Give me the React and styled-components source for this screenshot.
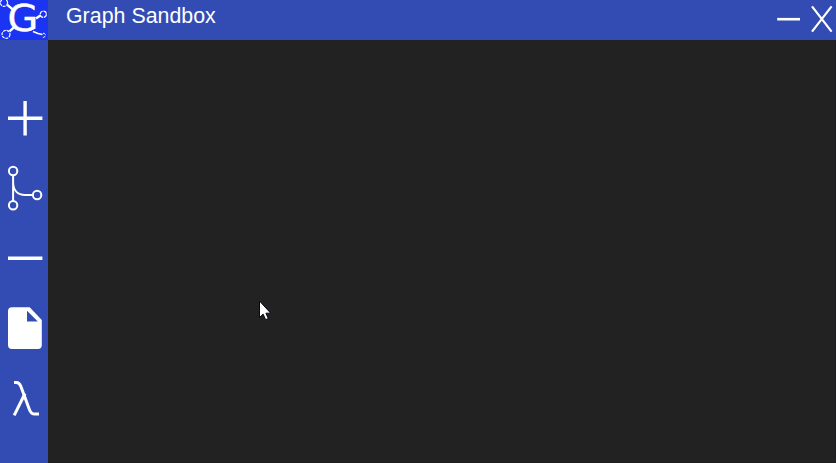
import React from "react";
import styled, { createGlobalStyle } from "styled-components";

const GlobalStyle = createGlobalStyle`
  html, body { margin: 0; background: #222222; }
  * { box-sizing: border-box; }
  svg { display: block; }
`;

const Window = styled.div`
  position: relative;
  display: grid;
  grid-template: 40px 1fr / 48px 1fr;
  width: 836px;
  height: 463px;
  overflow: hidden;
  background: #324cb4;
`;

const Logo = styled.div`
  width: 48px;
  height: 40px;
  background: #1a34f1;
`;

const TitleBar = styled.header`
  display: flex;
  justify-content: space-between;
  padding-left: 18px;
`;

const Title = styled.h1`
  margin: 0;
  padding-top: 4px;
  color: #fff;
  font: 400 21.33px/24px "Liberation Sans", Arial, sans-serif;
  letter-spacing: 0.03px;
`;

const WindowControls = styled.div`
  display: flex;
`;

const PlainButton = styled.button`
  display: block;
  padding: 0;
  border: 0;
  background: transparent;
  color: #fff;
`;

const WindowButton = styled(PlainButton)`
  width: ${(p) => p.$width}px;
  height: 40px;
`;

const Sidebar = styled.nav`
  display: flex;
  flex-direction: column;
  padding-top: 43px;
`;

const ToolButton = styled(PlainButton)`
  width: 48px;
  height: 70px;
`;

const Canvas = styled.main`
  background: #222222;
  border-right: 1px solid #1d1d1f;
  border-bottom: 1px solid #1d1d1f;
`;

const Pointer = styled.svg`
  position: absolute;
  left: 259px;
  top: 300px;
`;

const LogoMark = () => (
  <svg width="48" height="40" fill="none" stroke="#fff" overflow="visible">
    <circle cx="4" cy="2.8" r="3.6" strokeWidth="1.2" strokeDasharray="3 0.8" />
    <circle cx="43.3" cy="14.3" r="3.1" strokeWidth="1.2" strokeDasharray="4 0.8" />
    <circle cx="6" cy="34.3" r="4" strokeWidth="1.2" strokeDasharray="3 0.8" />
    <path d="M43 33.3c2-.2 2.7 1.2 2.2 2.7-.6 1.3-2 1.7-3 1.2" strokeDasharray="3 1" />
    <path d="M7.3 4.8l6 5M36 18.6l4.3-3M9.5 31.3l5-4.5" strokeWidth="2.4" />
    <path d="M33 31.5l5 2 4.5 1" strokeWidth="1.7" />
    <text
      x="0"
      y="0"
      transform="translate(7.6 31.4) scale(1.06 1)"
      fill="#fff"
      strokeWidth="0.4"
      fontFamily="DejaVu Sans, sans-serif"
      fontSize="37.5"
    >
      G
    </text>
  </svg>
);

const AddIcon = () => (
  <svg width="48" height="70" stroke="#fff" strokeWidth="3.4">
    <path d="M8 35.2h34.4M25.1 18v34.5" />
  </svg>
);

const BranchIcon = () => (
  <svg width="48" height="70" fill="none" stroke="#fff" strokeWidth="2">
    <circle cx="13.1" cy="18" r="4.2" />
    <circle cx="13.1" cy="52.2" r="4.2" />
    <circle cx="37.1" cy="42" r="4.2" />
    <path d="M13.1 22v26M13.1 29c0 8 4.5 13 12 13h8" />
  </svg>
);

const RemoveIcon = () => (
  <svg width="48" height="70" stroke="#fff" strokeWidth="3.4">
    <path d="M8 35.2h34.4" />
  </svg>
);

const FileIcon = () => (
  <svg width="48" height="70" fill="#fff">
    <path
      fillRule="evenodd"
      d="M12 14.2h17.7L41.8 27v25a4 4 0 0 1-4 4H12a4 4 0 0 1-4-4V18.2a4 4 0 0 1 4-4zM27 17.7v10.8h10.8z"
    />
  </svg>
);

const LambdaIcon = () => (
  <svg width="48" height="70" fill="none" stroke="#fff" strokeWidth="3">
    <path d="M14 19.4h2.4c2.6 0 3.4 1.2 4.4 3.8l8.6 23.2c1.3 3.5 2.5 4.7 5.2 4.7H39" />
    <path d="M25 30.5L14.2 52.4" />
  </svg>
);

const tools = [
  { label: "Add node", Icon: AddIcon },
  { label: "Add edge", Icon: BranchIcon },
  { label: "Remove", Icon: RemoveIcon },
  { label: "New file", Icon: FileIcon },
  { label: "Algorithms", Icon: LambdaIcon },
];

export default function App() {
  return (
    <>
      <GlobalStyle />
      <Window>
        <Logo>
          <LogoMark />
        </Logo>
        <TitleBar>
          <Title>Graph Sandbox</Title>
          <WindowControls>
            <WindowButton $width={34} aria-label="Minimize">
              <svg width="34" height="40" stroke="#fff" strokeWidth="2.6">
                <path d="M1.2 19.2h22.8" />
              </svg>
            </WindowButton>
            <WindowButton $width={26} aria-label="Close">
              <svg width="26" height="40" stroke="#fff" strokeWidth="2.2">
                <path d="M2 6.3l19.6 25.4M21.6 6.3L2 31.7" />
              </svg>
            </WindowButton>
          </WindowControls>
        </TitleBar>
        <Sidebar>
          {tools.map(({ label, Icon }) => (
            <ToolButton key={label} aria-label={label}>
              <Icon />
            </ToolButton>
          ))}
        </Sidebar>
        <Canvas />
        <Pointer width="14" height="22">
          <path
            d="M.5 1v16.5l3.6-3.4 2.5 5.6 2.7-1.2-2.4-5.3h4.8z"
            fill="#fff"
            stroke="#080814"
            strokeWidth="1"
          />
        </Pointer>
      </Window>
    </>
  );
}
